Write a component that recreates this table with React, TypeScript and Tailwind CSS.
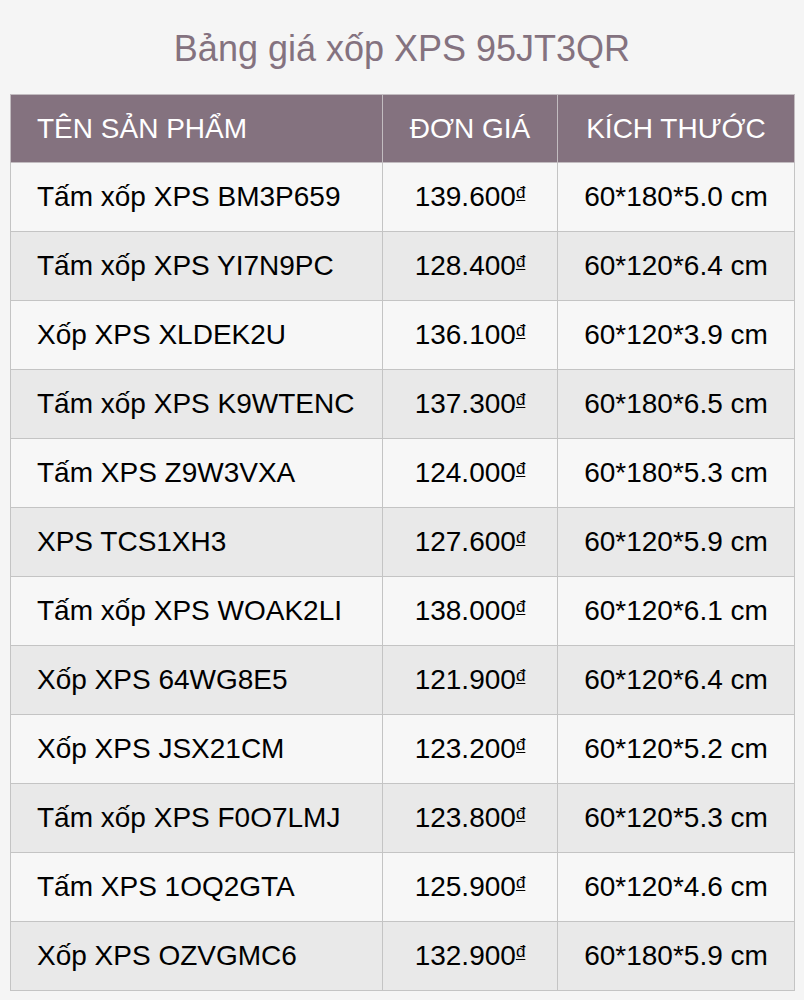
const rows: [string, string, string][] = [
  ["Tấm xốp XPS BM3P659", "139.600", "60*180*5.0 cm"],
  ["Tấm xốp XPS YI7N9PC", "128.400", "60*120*6.4 cm"],
  ["Xốp XPS XLDEK2U", "136.100", "60*120*3.9 cm"],
  ["Tấm xốp XPS K9WTENC", "137.300", "60*180*6.5 cm"],
  ["Tấm XPS Z9W3VXA", "124.000", "60*180*5.3 cm"],
  ["XPS TCS1XH3", "127.600", "60*120*5.9 cm"],
  ["Tấm xốp XPS WOAK2LI", "138.000", "60*120*6.1 cm"],
  ["Xốp XPS 64WG8E5", "121.900", "60*120*6.4 cm"],
  ["Xốp XPS JSX21CM", "123.200", "60*120*5.2 cm"],
  ["Tấm xốp XPS F0O7LMJ", "123.800", "60*120*5.3 cm"],
  ["Tấm XPS 1OQ2GTA", "125.900", "60*120*4.6 cm"],
  ["Xốp XPS OZVGMC6", "132.900", "60*180*5.9 cm"],
];

export default function App() {
  return (
    <div className="min-h-screen bg-[#f5f5f5] px-[10px] font-['Liberation_Sans',Arial,sans-serif]">
      <h1 className="h-[94px] pt-[28px] text-center text-[36px] leading-[42px] text-[#84727f]">
        Bảng giá xốp XPS 95JT3QR
      </h1>
      <table className="w-[784px] table-fixed border-collapse text-[28px] leading-[32px]">
        <colgroup>
          <col className="w-[372px]" />
          <col className="w-[175px]" />
          <col className="w-[237px]" />
        </colgroup>
        <thead>
          <tr className="h-[68px] bg-[#84727f] text-white">
            <th className="border border-[#c2bcc0] pl-[26px] text-left font-normal">TÊN SẢN PHẨM</th>
            <th className="border border-[#c2bcc0] text-center font-normal">ĐƠN GIÁ</th>
            <th className="border border-[#c2bcc0] text-center font-normal">KÍCH THƯỚC</th>
          </tr>
        </thead>
        <tbody>
          {rows.map(([name, price, size], i) => (
            <tr
              key={name}
              className={`h-[69px] text-black ${i % 2 === 0 ? "bg-[#f7f7f7]" : "bg-[#e9e9e9]"}`}
            >
              <td className="border border-[#c4c4c4] pl-[26px]">{name}</td>
              <td className="border border-[#c4c4c4] text-center">
                {price}
                <span className="relative -top-[8px] text-[17px] leading-none underline underline-offset-2">đ</span>
              </td>
              <td className="border border-[#c4c4c4] text-center">{size}</td>
            </tr>
          ))}
        </tbody>
      </table>
    </div>
  );
}
